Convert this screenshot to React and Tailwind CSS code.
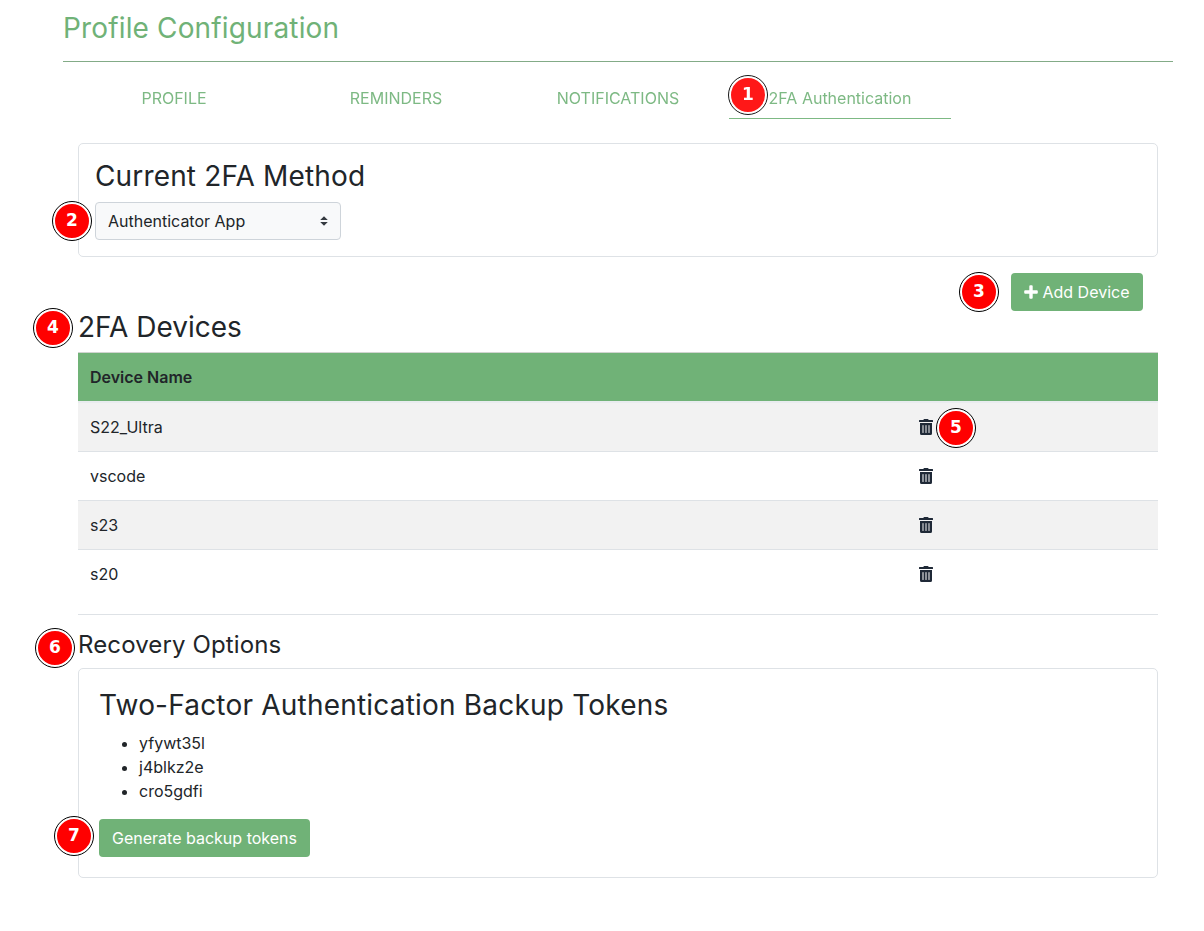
import { FaTrashAlt } from 'react-icons/fa';

const tabs = ['PROFILE', 'REMINDERS', 'NOTIFICATIONS', '2FA Authentication'];
const devices = ['S22_Ultra', 'vscode', 's23', 's20'];
const tokens = ['yfywt35l', 'j4blkz2e', 'cro5gdfi'];

function Badge({ n, className }) {
  return (
    <div className={`absolute w-[38px] h-[38px] rounded-full bg-[#ff0000] border-2 border-white outline outline-1 outline-black flex items-center justify-center text-white font-bold text-[17px] font-['DejaVu_Sans',sans-serif] ${className}`}>
      {n}
    </div>
  );
}

export default function App() {
  return (
    <div className="relative h-[931px] bg-white text-[#212529] text-[16px] font-['Inter',sans-serif] overflow-hidden">
      {/* Header */}
      <div className="ml-[63px] w-[1110px]">
        <h1 className="h-[61px] pt-[11px] text-[28px] tracking-[0.15px] leading-[34px] text-[#70b277]">Profile Configuration</h1>
        <div className="border-t border-[#70b277] grayscale-[0.4]" />
        <div className="flex h-[57px]">
          {tabs.map((t, i) => (
            <div
              key={t}
              className={`relative w-[222px] flex items-center justify-center pt-[16px] text-[#70b277] opacity-90 border-b ${i === 3 ? 'border-[#70b277]' : 'border-transparent'}`}
            >
              {t}
              {i === 3 && <Badge n="1" className="left-[0px] top-[14px]" />}
            </div>
          ))}
        </div>
      </div>

      <div className="ml-[78px] w-[1080px] mt-[24px]">
        {/* Current method */}
        <div className="h-[114px] border border-[#dee2e6] rounded-[5px] pl-[16px] pt-[14px]">
          <h2 className="text-[28px] tracking-[0.15px] leading-[36px] mb-[8px]">Current 2FA Method</h2>
          <div className="relative w-[246px]">
            <Badge n="2" className="left-[-42px] top-[0px]" />
            <select className="appearance-none w-full h-[38px] pl-[12px] bg-[#f8f9fa] border border-[#ced4da] rounded-[4px] text-[#212529] outline-none">
              <option>Authenticator App</option>
            </select>
            <svg className="absolute right-[12px] top-[14px] pointer-events-none" width="10" height="10" viewBox="0 0 10 10">
              <path d="M5 0.2 L8.8 4 H1.2 Z M1.2 6 H8.8 L5 9.8 Z" fill="#343a40" />
            </svg>
          </div>
        </div>

        {/* Add device */}
        <div className="relative flex justify-end pr-[15px] mt-[16px]">
          <Badge n="3" className="left-[882px] top-[0px]" />
          <button className="h-[38px] w-[132px] bg-[#70b277] rounded-[4px] text-white flex items-center justify-center gap-[4px]">
            <svg width="14" height="14" viewBox="0 0 14 14">
              <path d="M5.3 1.2 a1 1 0 0 1 1-1 h1.4 a1 1 0 0 1 1 1 v4.1 h4.1 a1 1 0 0 1 1 1 v1.4 a1 1 0 0 1-1 1 h-4.1 v4.1 a1 1 0 0 1-1 1 h-1.4 a1 1 0 0 1-1-1 v-4.1 h-4.1 a1 1 0 0 1-1-1 v-1.4 a1 1 0 0 1 1-1 h4.1 Z" fill="currentColor" />
            </svg>
            Add Device
          </button>
        </div>

        {/* Devices */}
        <div className="relative">
          <Badge n="4" className="left-[-44px] top-[-1px]" />
          <h2 className="text-[28px] leading-[34px] mt-[-1px] mb-[8px]">2FA Devices</h2>
        </div>
        <div className="h-[51px] flex items-center px-[12px] bg-[#70b277] border-t border-[#d0d4d0] border-b-2 border-b-[#e9ecef] font-semibold">
          Device Name
        </div>
        {devices.map((d, i) => (
          <div
            key={d}
            className={`relative h-[49px] flex items-center px-[12px] border-b ${i === 3 ? 'border-transparent' : 'border-[#dee2e6]'} ${i % 2 === 0 ? 'bg-[#f2f2f2]' : 'bg-white'}`}
          >
            <span className="w-[828px] shrink-0">{d}</span>
            <FaTrashAlt className="w-[14px] h-[16px] ml-[1px] text-[#1f2937]" />
            {i === 0 && <Badge n="5" className="left-[859px] top-[6px]" />}
          </div>
        ))}

        <div className="border-t border-[#dee2e6] mt-[15px]" />

        {/* Recovery */}
        <div className="relative">
          <Badge n="6" className="left-[-42px] top-[-1px]" />
          <h3 className="text-[24px] tracking-[0.12px] leading-[30px] mt-[15px] mb-[8px]">Recovery Options</h3>
        </div>
        <div className="relative h-[210px] border border-[#dee2e6] rounded-[5px] pl-[20px] pt-[19px]">
          <h2 className="text-[28px] tracking-[0.2px] leading-[34px] mb-[9px]">Two-Factor Authentication Backup Tokens</h2>
          <ul className="list-disc pl-[40px] leading-[24px] mb-[16px]">
            {tokens.map((t) => (
              <li key={t}>{t}</li>
            ))}
          </ul>
          <Badge n="7" className="left-[-24px] top-[148px]" />
          <button className="h-[38px] w-[211px] bg-[#70b277] rounded-[4px] text-white">
            Generate backup tokens
          </button>
        </div>
      </div>
    </div>
  );
}
